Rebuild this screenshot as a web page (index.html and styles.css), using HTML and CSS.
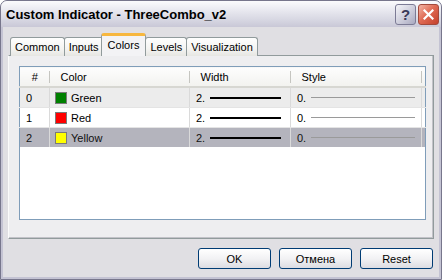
FILE: index.html
```html
<!DOCTYPE html>
<html lang="en">
<head>
    <meta charset="UTF-8">
    <title>Custom Indicator - ThreeCombo_v2</title>
    <link rel="stylesheet" href="styles.css">
</head>
<body>
    <div class="window">
        <!-- Barre de titre -->
        <div class="titlebar">
            <span class="title">Custom Indicator - ThreeCombo_v2</span>
            <div class="caption-buttons">
                <button class="cap-btn help">?</button>
                <button class="cap-btn close">
                    <svg width="11" height="11" viewBox="0 0 11 11">
                        <path d="M1.5 1.5 L9.5 9.5 M9.5 1.5 L1.5 9.5" stroke="#fff" stroke-width="2.2" stroke-linecap="square"/>
                    </svg>
                </button>
            </div>
        </div>

        <div class="client">
            <!-- Onglets -->
            <ul class="tabs">
                <li class="tab">Common</li>
                <li class="tab">Inputs</li>
                <li class="tab active">Colors</li>
                <li class="tab">Levels</li>
                <li class="tab">Visualization</li>
            </ul>

            <div class="panel">
                <table class="list">
                    <colgroup>
                        <col class="c-num">
                        <col class="c-color">
                        <col class="c-width">
                        <col class="c-style">
                        <col>
                    </colgroup>
                    <thead>
                        <tr>
                            <th class="num">#</th>
                            <th>Color</th>
                            <th>Width</th>
                            <th>Style</th>
                            <th class="filler"></th>
                        </tr>
                    </thead>
                    <tbody>
                        <tr class="row-alt">
                            <td class="num">0</td>
                            <td><span class="cell"><span class="swatch green"></span>Green</span></td>
                            <td><span class="cell">2.<span class="line thick"></span></span></td>
                            <td><span class="cell">0.<span class="line thin"></span></span></td>
                            <td></td>
                        </tr>
                        <tr>
                            <td class="num">1</td>
                            <td><span class="cell"><span class="swatch red"></span>Red</span></td>
                            <td><span class="cell">2.<span class="line thick"></span></span></td>
                            <td><span class="cell">0.<span class="line thin"></span></span></td>
                            <td></td>
                        </tr>
                        <tr class="row-selected">
                            <td class="num">2</td>
                            <td><span class="cell"><span class="swatch yellow"></span>Yellow</span></td>
                            <td><span class="cell">2.<span class="line thick"></span></span></td>
                            <td><span class="cell">0.<span class="line thin"></span></span></td>
                            <td></td>
                        </tr>
                    </tbody>
                </table>
            </div>

            <!-- Boutons -->
            <div class="actions">
                <button class="btn">OK</button>
                <button class="btn">Отмена</button>
                <button class="btn">Reset</button>
            </div>
        </div>
    </div>
</body>
</html>
```

FILE: styles.css
```css
/* Page */
body {
    margin: 0;
    background: #ffffff;
    font-family: "Liberation Sans", Arial, sans-serif;
    font-size: 11px;
    color: #000;
}

/* Fenêtre */
.window {
    width: 442px;
    height: 280px;
    box-sizing: border-box;
    display: flex;
    flex-direction: column;
    border: 1px solid #77768c;
    border-radius: 7px 7px 0 0;
    background: #c4c3d3;
    overflow: hidden;
}

/* Barre de titre */
.titlebar {
    height: 26px;
    flex: none;
    display: flex;
    align-items: center;
    justify-content: space-between;
    padding: 0 2px 0 5px;
    background: linear-gradient(#fbfbfd 0%, #e9e9f0 35%, #d8d8e3 70%, #c9c8d7 100%);
}

.title {
    font-weight: bold;
    font-size: 13px;
    color: #000;
    padding-top: 1px;
}

.caption-buttons {
    display: flex;
    gap: 2px;
}

.cap-btn {
    width: 21px;
    height: 21px;
    padding: 0;
    border-radius: 3px;
    display: flex;
    align-items: center;
    justify-content: center;
    font-family: "Liberation Sans", Arial, sans-serif;
}

.help {
    border: 1px solid #7c7b95;
    background: linear-gradient(135deg, #f4f4f8 0%, #c9c9d8 60%, #a9a9c0 100%);
    color: #3a3a58;
    font-size: 15px;
    font-weight: bold;
}

.close {
    border: 1px solid #a24a3c;
    background: linear-gradient(135deg, #f2b5a6 0%, #e06c55 45%, #c4402b 100%);
}

/* Zone client */
.client {
    flex: 1;
    display: flex;
    flex-direction: column;
    margin: 0 2px 2px;
    padding: 6px 5px 8px 5px;
    background: #e0dfe3;
}

/* Onglets */
.tabs {
    list-style: none;
    margin: 0 0 -1px 2px;
    padding: 0;
    display: flex;
    align-items: flex-end;
    position: relative;
    z-index: 1;
}

.tab {
    height: 19px;
    box-sizing: border-box;
    padding: 0 4px;
    line-height: 18px;
    border: 1px solid #919b9c;
    border-bottom: none;
    border-radius: 3px 3px 0 0;
    background: linear-gradient(#fefefe, #f4f4f2 60%, #e6e6e2);
    margin-right: -1px;
}

.tab.active {
    height: 23px;
    line-height: 19px;
    padding: 0 6px;
    margin: 0 -1px 0 -2px;
    border-top: 3px solid #f7b73e;
    background: #f3f3f5;
    position: relative;
    z-index: 2;
}

/* Panneau */
.panel {
    height: 184px;
    box-sizing: border-box;
    border: 1px solid #919b9c;
    border-left-color: #fbfbfb;
    padding: 10px 7px 0 10px;
    background: #eeeef0;
    box-shadow: inset -1px -1px 0 #c2c2c8;
}

/* Liste */
.list {
    width: 100%;
    height: 154px;
    table-layout: fixed;
    border-collapse: collapse;
    border: 1px solid #7f9db9;
    background: #ffffff;
}

.c-num { width: 30px; }
.c-color { width: 140px; }
.c-width { width: 101px; }
.c-style { width: 131px; }

.list th {
    height: 19px;
    padding: 0 0 0 11px;
    text-align: left;
    font-weight: normal;
    background: linear-gradient(#fdfdfd, #f2f2ef);
    border-bottom: 2px solid #d7d7d2;
    position: relative;
}

.list th::after {
    content: "";
    position: absolute;
    right: 0;
    top: 4px;
    bottom: 3px;
    width: 1px;
    background: #c5c5c0;
}

.list th.num {
    text-align: center;
    padding: 0;
}

.list th.filler::after {
    display: none;
}

.list td {
    height: 19px;
    padding: 0 0 0 6px;
    border-bottom: 1px solid #e4e4e4;
    border-right: 1px solid #dadada;
    white-space: nowrap;
    vertical-align: middle;
}

.list tbody tr:last-child td {
    border-bottom: none;
}

.list td:last-child {
    border-right: none;
}

.row-alt td {
    background: #ececec;
}

.row-selected td {
    background: #b4b4bd;
    color: #111;
}

.list tbody::after {
    content: "";
    display: table-row;
}

/* Contenu des cellules */
.cell {
    display: flex;
    align-items: center;
}

.swatch {
    width: 10px;
    height: 10px;
    border: 1px solid #7a7a7a;
    margin: 0 4px 0 -1px;
}

.green { background: #008000; }
.red { background: #ff0000; }
.yellow { background: #ffff00; }

.line {
    flex: 1;
    margin-left: 5px;
}

.line.thick {
    height: 2px;
    background: #000;
    margin-right: 9px;
}

.line.thin {
    height: 1px;
    background: #9a9a9a;
    margin-right: 6px;
}

/* Boutons d'action */
.actions {
    margin-top: auto;
    display: flex;
    justify-content: flex-end;
    gap: 8px;
    padding-right: 1px;
}

.btn {
    width: 73px;
    height: 21px;
    padding: 0;
    font-family: "Liberation Sans", Arial, sans-serif;
    font-size: 11px;
    color: #000;
    border: 1px solid #003c74;
    border-radius: 3px;
    background: linear-gradient(#ffffff, #f2f2f4 50%, #dcdce2);
}
```
